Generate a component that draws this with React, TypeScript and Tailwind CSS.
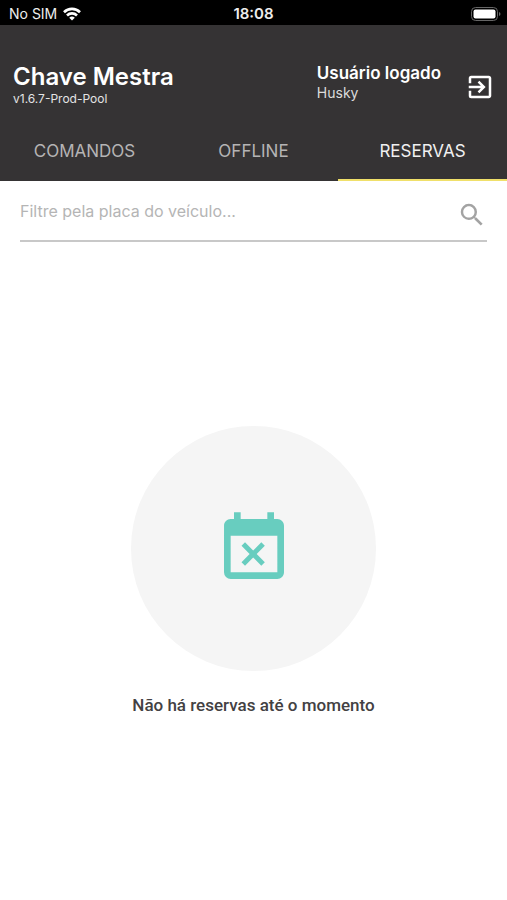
import React from "react";
import { MdEventBusy, MdExitToApp, MdSearch } from "react-icons/md";

function StatusBar() {
  return (
    <div className="relative flex h-[25px] items-center justify-between bg-black pl-[9px] pr-[6px] pt-[2px] text-[#ededed]">
      <div className="flex items-center gap-[6px] text-sm leading-5">
        <span>No SIM</span>
        <svg viewBox="0 0 18 14" className="h-[14px] w-[18px]" fill="none" stroke="#fff" strokeWidth="2.6" aria-hidden="true">
          <path d="M1 5.200a11.400 11.400 0 0 1 16 0" />
          <path d="M4 8.500a7 7 0 0 1 10 0" />
          <path d="M9 13.600 6.200 10.800a4 4 0 0 1 5.600 0z" fill="#fff" stroke="none" />
        </svg>
      </div>
      <span className="absolute inset-x-0 text-center text-[15px] font-semibold leading-5">18:08</span>
      <svg viewBox="0 0 30 14" className="h-[14px] w-[30px]" aria-hidden="true">
        <rect x=".5" y=".5" width="26" height="13" rx="4" fill="none" stroke="#666" />
        <rect x="2.500" y="2.500" width="22" height="9" rx="2" fill="#fff" />
        <path d="M28 5v4c2-.8 2-3.200 0-4" fill="#666" />
      </svg>
    </div>
  );
}

const tabs = ["COMANDOS", "OFFLINE", "RESERVAS"];

export default function App() {
  return (
    <div className="flex min-h-screen flex-col bg-white font-['Inter',sans-serif]">
      <StatusBar />
      <header className="bg-[#353334] text-white">
        <div className="flex h-24 items-center justify-between pl-[13px] pr-3 pt-7">
          <div>
            <h1 className="text-2xl font-semibold leading-6">Chave Mestra</h1>
            <p className="text-xs leading-5 text-[#e4e4e4]">v1.6.7-Prod-Pool</p>
          </div>
          <div className="flex items-center gap-6">
            <div className="pb-2">
              <p className="text-[17px] font-semibold leading-5">Usuário logado</p>
              <p className="text-sm leading-5 text-[#dcdcdc]">Husky</p>
            </div>
            <button type="button" aria-label="Sair">
              <MdExitToApp size={30} />
            </button>
          </div>
        </div>
        <nav className="grid h-[60px] grid-cols-3 text-[17px]">
          {tabs.map((tab) => (
            <button
              key={tab}
              type="button"
              className={
                tab === "RESERVAS"
                  ? "border-b-2 border-[#f0e06a] pt-1 text-[#f0f0f0]"
                  : "border-b-2 border-transparent pt-1 text-[#b5b4b4]"
              }
            >
              {tab}
            </button>
          ))}
        </nav>
      </header>
      <main className="flex flex-1 flex-col px-5">
        <div className="flex h-[61px] items-center justify-between border-b-2 border-[#c8c8c8]">
          <input
            type="text"
            aria-label="Filtre pela placa do veículo"
            placeholder="Filtre pela placa do veículo..."
            className="min-w-0 flex-1 text-base text-[#333] outline-none placeholder:text-[#b5b5b5]"
          />
          <button type="button" aria-label="Buscar" className="mt-2 text-[#a3a3a3]">
            <MdSearch size={30} />
          </button>
        </div>
        <section className="flex flex-1 flex-col items-center pt-[184px]">
          <div className="flex size-[245px] items-center justify-center rounded-full bg-[#f5f5f5]">
            <MdEventBusy size={80} color="#68cdbf" />
          </div>
          <p className="mt-[22px] font-['Roboto',sans-serif] text-[17px] font-medium leading-6 text-[#434143]">
            Não há reservas até o momento
          </p>
        </section>
      </main>
    </div>
  );
}
